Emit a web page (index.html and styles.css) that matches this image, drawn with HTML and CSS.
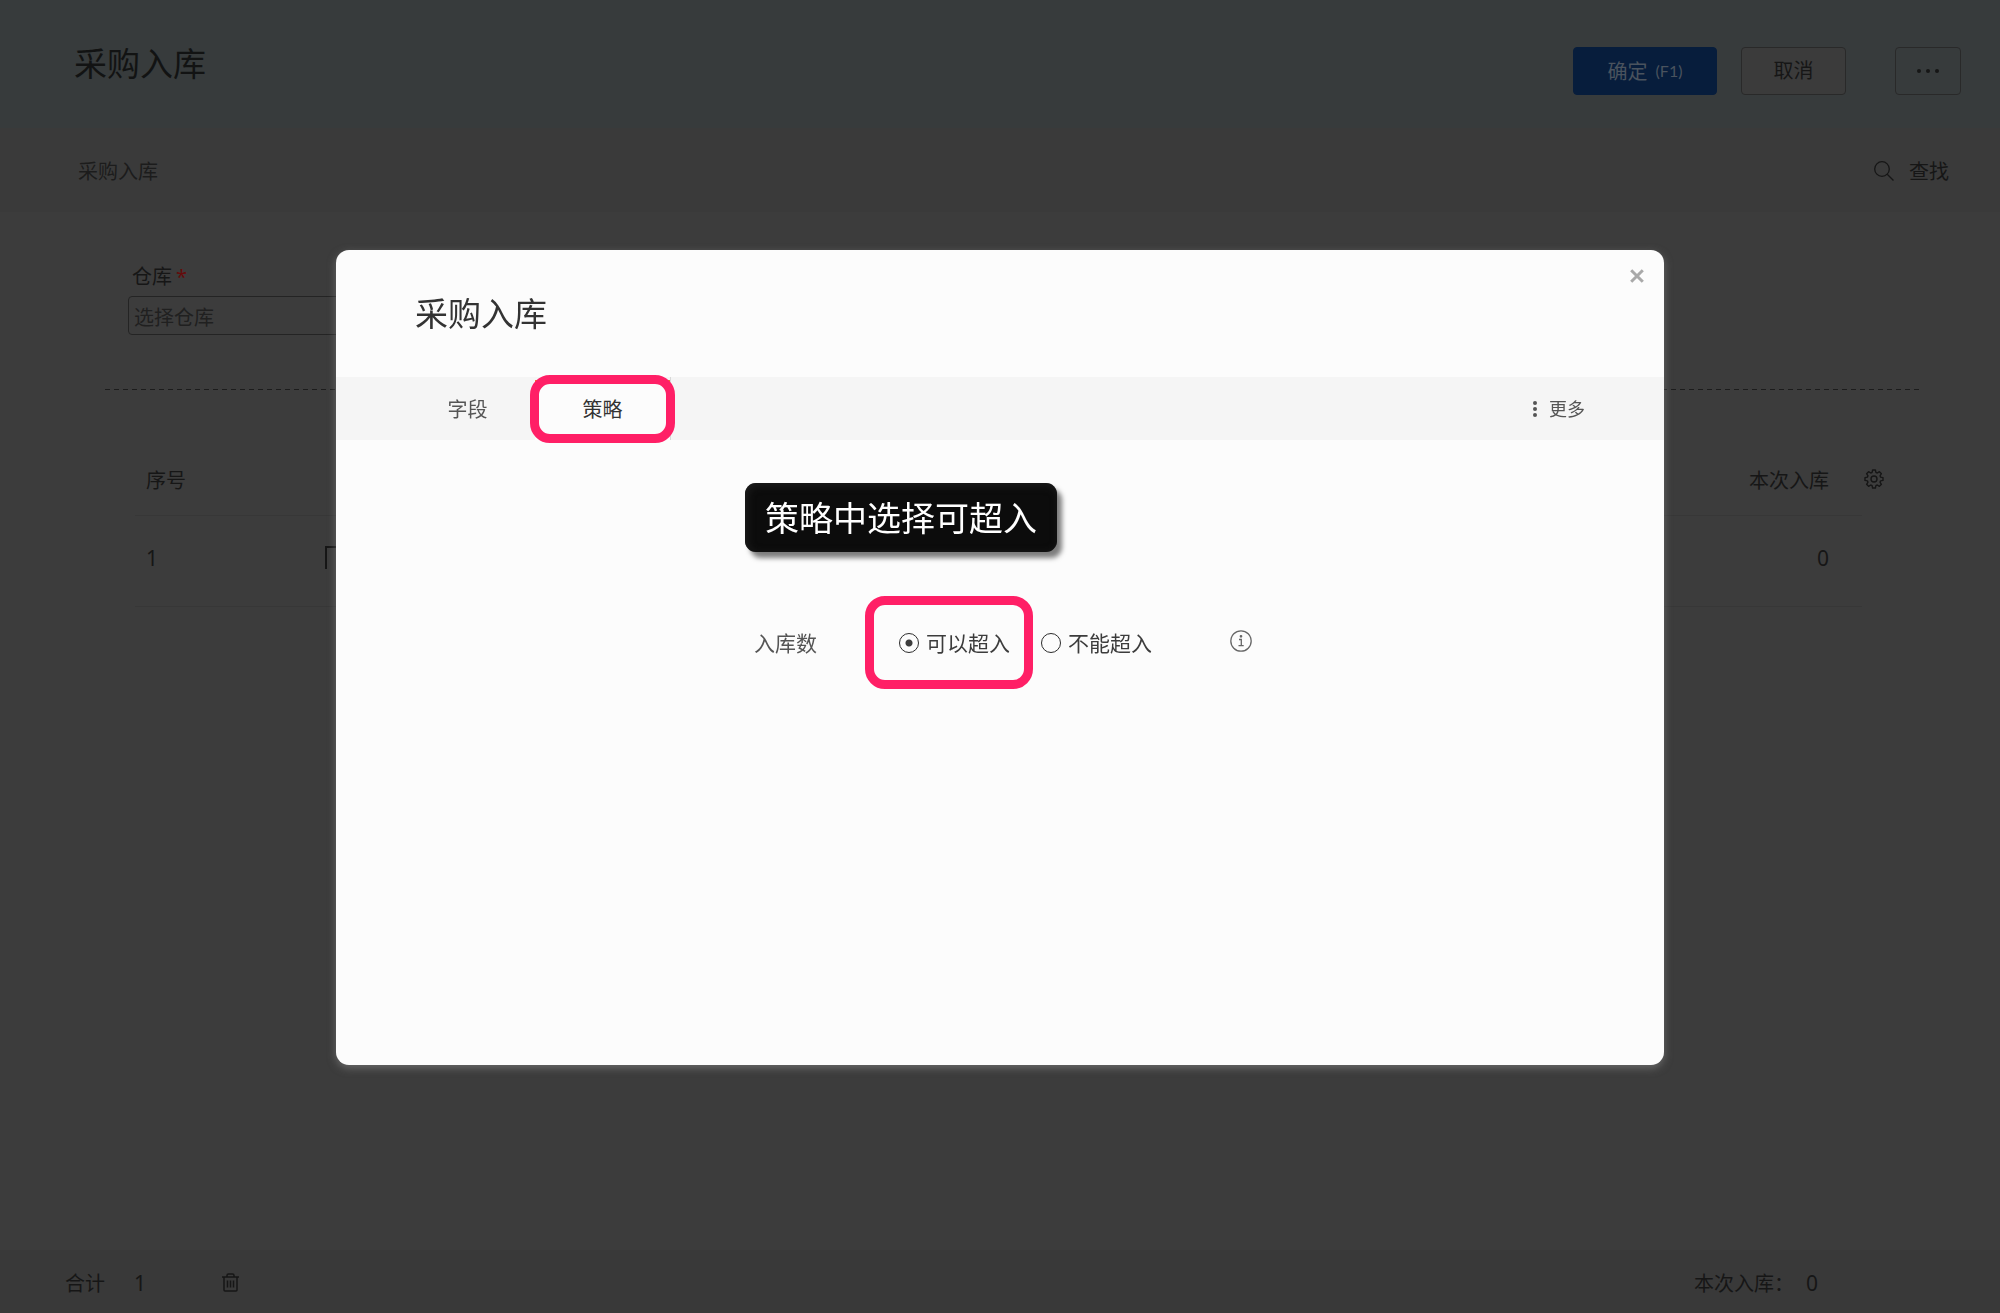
FILE: index.html
```html
<!DOCTYPE html>
<html lang="zh-CN">
<head>
<meta charset="utf-8">
<meta name="viewport" content="width=device-width, initial-scale=1">
<title>采购入库</title>
<link rel="stylesheet" href="styles.css">
</head>
<body>
<div class="page">
  <header class="page-header">
    <h1 class="page-title">采购入库</h1>
    <div class="actions">
      <button type="button" class="btn btn-primary">确定 <span class="shortcut">(F1)</span></button>
      <button type="button" class="btn btn-cancel">取消</button>
      <button type="button" class="btn btn-more" aria-label="更多操作">
        <svg width="22" height="4" viewBox="0 0 22 4" fill="currentColor"><circle cx="2" cy="2" r="2"/><circle cx="11" cy="2" r="2"/><circle cx="20" cy="2" r="2"/></svg>
      </button>
    </div>
  </header>

  <div class="toolbar">
    <span class="toolbar-name">采购入库</span>
    <button type="button" class="search">
      <svg width="20" height="20" viewBox="0 0 20 20" fill="none" stroke="currentColor" stroke-width="1.3"><circle cx="8" cy="8" r="7.3"/><path d="M13.2 13.2 19.5 19.5"/></svg>
      <span class="search-text">查找</span>
    </button>
  </div>

  <main class="content">
    <div class="field">
      <label class="field-label" for="warehouse">仓库<span class="required">*</span></label>
      <input class="field-input" id="warehouse" type="text" placeholder="选择仓库">
    </div>
    <div class="grid-area">
      <table class="lines">
        <thead>
          <tr><th class="col-no">序号</th><th class="col-goods"></th><th class="col-qty">本次入库</th></tr>
        </thead>
        <tbody>
          <tr><td class="col-no number">1</td><td class="col-goods"><svg width="26" height="23" viewBox="0 0 26 23" fill="none" stroke="currentColor" stroke-width="2"><path d="M1 23V1H26"/></svg></td><td class="col-qty number">0</td></tr>
        </tbody>
      </table>
      <button type="button" class="gear" aria-label="列设置">
        <svg width="20" height="20" viewBox="0 0 20 20" fill="none" stroke="currentColor" stroke-width="1.4" stroke-linejoin="round"><path d="M8.600 1h2.800l.5 2.400 1.400.6 2.100-1.300 2 2L16 6.800l.6 1.300 2.400.5v2.800l-2.400.5-.6 1.300 1.400 2.100-2 2-2.100-1.300-1.400.6-.5 2.400H8.600l-.5-2.400-1.400-.6-2.100 1.300-2-2L4 13.200l-.6-1.300L1 11.400V8.600l2.400-.5L4 6.800 2.600 4.700l2-2L6.700 4l1.400-.6z"/><circle cx="10" cy="10" r="3"/></svg>
      </button>
    </div>
  </main>

  <footer class="summary">
    <span class="sum-label">合计</span>
    <span class="sum-count number">1</span>
    <button type="button" class="trash" aria-label="删除">
      <svg width="17" height="19" viewBox="0 0 17 19" fill="none" stroke="currentColor" stroke-width="1.5"><path d="M0 4H17M5 4V2.500Q5 1 6.500 1h4Q12 1 12 2.500V4M2 4V17q0 1 1 1H14q1 0 1-1V4M5.500 7.500V14.500M8.500 7.500V14.500M11.500 7.500V14.500"/></svg>
    </button>
    <span class="sum-qty-label">本次入库：</span>
    <span class="sum-qty number">0</span>
  </footer>
</div>

<div class="overlay">
  <section class="dialog" role="dialog" aria-modal="true" aria-labelledby="dialog-title">
    <header class="dialog-header">
      <h2 class="dialog-title" id="dialog-title">采购入库</h2>
      <button type="button" class="close" aria-label="关闭">
        <svg width="14" height="14" viewBox="0 0 14 14" fill="none" stroke="currentColor" stroke-width="3"><path d="M1.200 1.200 12.800 12.800M12.800 1.200 1.200 12.800"/></svg>
      </button>
    </header>
    <nav class="tabs">
      <button type="button" class="tab">字段</button>
      <button type="button" class="tab tab-active">策略</button>
      <button type="button" class="more">
        <svg width="4" height="18" viewBox="0 0 4 18" fill="currentColor"><circle cx="2" cy="3" r="2"/><circle cx="2" cy="9" r="2"/><circle cx="2" cy="15" r="2"/></svg>
        更多
      </button>
    </nav>
    <div class="dialog-body">
      <p class="callout">策略中选择可超入</p>
      <div class="policy" role="radiogroup" aria-labelledby="policy-label">
        <span class="policy-label" id="policy-label">入库数</span>
        <label class="option option-marked"><input class="radio" type="radio" name="over" checked>可以超入</label>
        <label class="option"><input class="radio" type="radio" name="over">不能超入</label>
        <button type="button" class="info" aria-label="说明">
          <svg width="22" height="22" viewBox="0 0 22 22" fill="none" stroke="currentColor" stroke-width="1.300"><circle cx="11" cy="11" r="10.200"/><path d="M9 9.500h2.300V15.500M8.500 15.700h5.200"/><circle cx="11" cy="6.300" r=".7" fill="currentColor"/></svg>
        </button>
      </div>
    </div>
  </section>
</div>
</body>
</html>
```
FILE: styles.css
```css
* { box-sizing: border-box; }

body {
  margin: 0;
  background: #3c3c3c;
  color: #161616;
  font-family: Lato, "Noto Sans CJK SC", sans-serif;
  font-size: 20px;
  line-height: 28px;
}

button {
  padding: 0;
  border: 0;
  background: none;
  color: inherit;
  font: inherit;
  cursor: pointer;
}

svg { display: block; }

.number {
  font-family: "Noto Sans", sans-serif;
  font-size: 21px;
}

/* Page behind the dialog */
.page {
  display: flex;
  flex-direction: column;
  min-height: 100vh;
}

.page-header {
  display: flex;
  justify-content: space-between;
  align-items: flex-start;
  height: 128px;
  padding: 47px 39px 0 74px;
  background: #373b3c;
}

.page-title {
  margin: 0;
  color: #121313;
  font-size: 33px;
  font-weight: 400;
  line-height: 32px;
}

.actions { display: flex; }

.btn {
  display: flex;
  justify-content: center;
  align-items: center;
  height: 48px;
  border: 1px solid #292929;
  border-radius: 4px;
}

.btn-primary {
  gap: 8px;
  width: 144px;
  border-color: #071d3c;
  background: #071d3c;
  color: #4a535e;
}

.shortcut { font-size: 16px; }

.btn-cancel {
  width: 105px;
  margin-left: 24px;
  padding-bottom: 2px;
  background: #3b3b3b;
}

.btn-more {
  width: 66px;
  margin-left: 49px;
}

.toolbar {
  display: flex;
  justify-content: space-between;
  align-items: center;
  height: 84px;
  padding: 2px 51px 0 78px;
  background: #3a3a3a;
}

.toolbar-name { color: #1c1c1c; }

.search {
  display: flex;
  align-items: center;
  gap: 15px;
}

.content {
  flex: 1;
  padding: 50px 79px 0 105px;
}

.field {
  display: flex;
  flex-direction: column;
  width: 420px;
  height: 127px;
  padding-left: 23px;
}

.field-label { padding-left: 4px; }

.required {
  margin-left: 4px;
  color: #640b0b;
  font-family: "Noto Sans", sans-serif;
}

.field-input {
  height: 39px;
  margin-top: 5px;
  padding: 3px 5px 0;
  border: 1px solid #242424;
  border-radius: 4px;
  background: transparent;
  color: inherit;
  font: inherit;
}

.field-input::placeholder {
  color: #202020;
  opacity: 1;
}

.grid-area {
  display: flex;
  align-items: flex-start;
  padding: 60px 37px 0 30px;
  background: repeating-linear-gradient(90deg, #1c1c1c 0 5px, transparent 5px 9px) top / 100% 1px no-repeat;
}

.lines {
  flex: 1;
  border-collapse: collapse;
  table-layout: fixed;
}

.lines th,
.lines td {
  padding: 0;
  border-bottom: 1px solid #373737;
  font-weight: 400;
  text-align: left;
}

.lines th { height: 66px; padding-bottom: 4px; }
.lines td { height: 91px; padding-bottom: 6px; }

.lines .col-no {
  width: 190px;
  padding-left: 11px;
}

.lines .col-qty {
  width: 240px;
  padding-right: 33px;
  text-align: right;
}

.gear {
  margin: 20px 0 0 2px;
}

.summary {
  display: flex;
  align-items: center;
  height: 63px;
  padding: 2px 182px 0 65px;
  background: #393939;
}

.sum-count { margin-left: 29px; }
.trash { margin-left: 76px; }
.sum-qty-label { margin-left: auto; }
.sum-qty { margin-left: 12px; }

/* Dialog */
.overlay {
  position: fixed;
  inset: 0;
  padding: 250px 16.8% 0;
}

.dialog {
  min-height: 815px;
  border-radius: 13px;
  background: #fcfcfc;
  box-shadow: 0 3px 9px rgba(150, 150, 150, 0.5);
  color: #3c3c3c;
}

.dialog-header {
  display: flex;
  justify-content: space-between;
  align-items: flex-start;
  height: 127px;
  padding: 19px 20px 0 79px;
}

.dialog-title {
  margin: 0;
  padding-top: 28px;
  color: #333;
  font-size: 33px;
  font-weight: 400;
  line-height: 32px;
}

.close { color: #a9a9a9; }

.tabs {
  display: flex;
  height: 63px;
  padding: 0 79px 0 64px;
  background: #f5f5f5;
}

.tab {
  width: 135px;
  padding-top: 1px;
  color: #555;
}

.tab-active {
  position: relative;
  width: 136px;
  border-right: 1px solid #d8d8d8;
  background: linear-gradient(#f5f5f5 3px, #ef8a1d 3px 6px, #fcfcfc 6px);
  color: #333;
}

/* Highlight frame drawn over the selected tab */
.tab-active::after {
  content: "";
  position: absolute;
  inset: -2px -5px -3px -5px;
  border: 9px solid #ff1f66;
  border-radius: 20px;
}

.more {
  display: flex;
  align-items: center;
  gap: 12px;
  margin-left: auto;
  color: #555;
  font-size: 18px;
}

.dialog-body { padding: 43px 0 0 409px; }

.callout {
  width: fit-content;
  margin: 0 0 44px;
  padding: 18px 20px 17px;
  border-radius: 11px;
  background: #0c0c0c;
  box-shadow: 5px 6px 5px rgba(0, 0, 0, 0.5), inset 2px 2px 8px #1e1e1e;
  color: #fff;
  font-size: 34px;
  line-height: 34px;
}

.policy {
  display: flex;
  align-items: center;
  padding-left: 9px;
  font-size: 21px;
}

.policy-label { color: #555; }

.option {
  display: flex;
  align-items: center;
  gap: 7px;
  margin-left: 8px;
}

.option-marked {
  height: 93px;
  margin-left: 48px;
  padding: 0 14px 0 25px;
  border: 9px solid #ff1f66;
  border-radius: 20px;
}

.radio {
  appearance: none;
  width: 20px;
  height: 20px;
  margin: 0;
  border: 1px solid #2c2c2c;
  border-radius: 50%;
}

.radio:checked {
  background: radial-gradient(circle, #3c3c3c 3px, transparent 4px);
}

.info {
  margin-left: 78px;
  padding-bottom: 3px;
  color: #666;
}
```
